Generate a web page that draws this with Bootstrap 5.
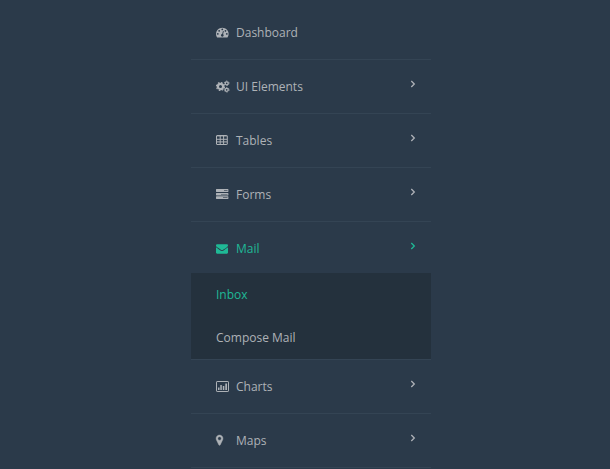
<!DOCTYPE html>
<html lang="en">
<head>
<meta charset="utf-8">
<title>Menu</title>
<link rel="stylesheet" href="https://cdn.jsdelivr.net/npm/bootstrap@5.3.0/dist/css/bootstrap.min.css">
<style>
body{background:#2b3a4a;font-family:"Open Sans",sans-serif;font-size:12px;line-height:18px;overflow:hidden}
.side-menu{width:240px;margin-left:191px;padding-top:6px}
.menu-item{border-bottom:1px solid #344454}
.menu-link{height:53px;padding:0 15px 0 25px;color:#aeb2b7}
.menu-icon{width:14px;height:12px;margin:-1px 6px 0 0;flex:none;overflow:visible}
.chevron{width:6px;height:8px;margin-top:-5px}
.sub-list{background:#24313d;margin-top:-2px}
.sub-link{height:43px;padding-left:25px;color:#aeb2b7}
.sub-link.current,.menu-link.current{color:#1fb996}
</style>
<script src="https://cdn.jsdelivr.net/npm/bootstrap@5.3.0/dist/js/bootstrap.bundle.min.js"></script>
</head>
<body>
<svg class="d-none"><symbol id="chev" viewBox="0 0 6 8"><path d="M1.3 1l3 3-3 3" fill="none" stroke="currentColor" stroke-width="1.3"/></symbol></svg>
<nav class="side-menu">
<ul class="list-unstyled mb-0">
<li class="menu-item"><a href="#" class="menu-link d-flex align-items-center text-decoration-none">
<svg class="menu-icon" viewBox="0 0 2090 1792" fill="currentColor"><path transform="translate(0 -20) scale(1.05)" d="M384 1152q0-53-37.5-90.5t-90.5-37.5-90.5 37.5-37.5 90.5 37.5 90.5 90.5 37.5 90.5-37.5 37.5-90.5zm192-448q0-53-37.5-90.5t-90.5-37.5-90.5 37.5-37.5 90.5 37.5 90.5 90.5 37.5 90.5-37.5 37.5-90.5zm428 481l101-382q6-26-7.5-48.5t-38.5-29.5-48 6.500-30 39.500l-101 382q-60 5-107 43.500t-63 98.500q-20 77 20 146t117 89 146-20 89-117q16-60-6-117t-72-91zm660-33q0-53-37.500-90.500t-90.500-37.500-90.500 37.500-37.500 90.500 37.500 90.500 90.500 37.500 90.500-37.500 37.500-90.500zm-640-640q0-53-37.500-90.500t-90.500-37.500-90.500 37.500-37.500 90.500 37.500 90.500 90.500 37.500 90.500-37.500 37.500-90.500zm448 192q0-53-37.500-90.500t-90.500-37.500-90.500 37.500-37.500 90.500 37.500 90.500 90.500 37.500 90.500-37.500 37.500-90.500zm320 448q0 261-141 483-19 29-54 29h-1402q-35 0-54-29-141-221-141-483 0-182 71-348t191-286 286-191 348-71 348 71 286 191 191 286 71 348z"/></svg>
<span>Dashboard</span></a></li>
<li class="menu-item"><a href="#" class="menu-link d-flex align-items-center text-decoration-none">
<svg class="menu-icon" viewBox="0 -.5 14 12" fill="none" stroke="currentColor"><circle cx="4.500" cy="6" r="2.600" stroke-width="2.200"/><circle cx="4.500" cy="6" r="4" stroke-width="1.200" stroke-dasharray="1.600 1.540"/><circle cx="10.700" cy="2.800" r="1.500" stroke-width="1.300"/><circle cx="10.700" cy="2.800" r="2.300" stroke-width=".9" stroke-dasharray="1.200 1.100"/><circle cx="10.700" cy="9.300" r="1.500" stroke-width="1.300"/><circle cx="10.700" cy="9.300" r="2.300" stroke-width=".9" stroke-dasharray="1.200 1.100"/></svg>
<span>UI Elements</span><svg class="chevron ms-auto"><use href="#chev"/></svg></a></li>
<li class="menu-item"><a href="#" class="menu-link d-flex align-items-center text-decoration-none">
<svg class="menu-icon" viewBox="0 0 14 12" fill="none" stroke="currentColor"><rect x=".5" y="1.500" width="10.800" height="9" rx=".5"/><path d="M1 2.200h10" stroke-width=".6"/><path d="M1 5.300h10M1 7.900h10M4.200 2v9M7.600 2v9"/></svg>
<span>Tables</span><svg class="chevron ms-auto"><use href="#chev"/></svg></a></li>
<li class="menu-item"><a href="#" class="menu-link d-flex align-items-center text-decoration-none">
<svg class="menu-icon" viewBox="0 0 14 12" fill="currentColor"><path d="M.4 1H12q.4 0 .4.400V3.600q0 .4-.4.400H.4Q0 4 0 3.600V1.400Q0 1 .4 1ZM.4 5H12q.4 0 .4.400V7q0 .4-.4.400H.4Q0 7.400 0 7V5.400Q0 5 .4 5ZM.4 8.300H12q.4 0 .4.400V10.600q0 .4-.4.400H.4Q0 11 0 10.600V8.700Q0 8.300 .4 8.300Z"/><path fill="#2b3a4a" fill-opacity=".6" d="M8 2h3.500v1H8zM5 6h6.500v.8H5zM7 9h4.500v1H7z"/></svg>
<span>Forms</span><svg class="chevron ms-auto"><use href="#chev"/></svg></a></li>
<li class="menu-item"><a href="#" class="menu-link current d-flex align-items-center text-decoration-none">
<svg class="menu-icon" viewBox="0 -80 2090 1792" fill="currentColor"><path d="M1792 710v794q0 66-47 113t-113 47h-1472q-66 0-113-47t-47-113v-794q44 49 101 87 362 246 497 345 57 42 92.500 65.500t94.500 48 110 24.500h2q51 0 110-24.500t94.500-48 92.500-65.500q170-123 498-345 57-39 100-87zm0-294q0 79-49 151t-122 123q-376 261-468 325-10 7-42.500 31t-54 38.500-52 32.500-57.500 27-50 9h-2q-23 0-50-9t-57.500-27-52-32.500-54-38.500-42.500-31q-91-64-262-182.500t-205-142.500q-62-42-117-115.500t-55-136.500q0-78 41.500-130t118.500-52h1472q65 0 112.500 47t47.500 113z"/></svg>
<span>Mail</span><svg class="chevron ms-auto"><use href="#chev"/></svg></a>
<ul class="sub-list list-unstyled">
<li><a href="#" class="sub-link current d-flex align-items-center text-decoration-none">Inbox</a></li>
<li><a href="#" class="sub-link d-flex align-items-center text-decoration-none">Compose Mail</a></li>
</ul></li>
<li class="menu-item"><a href="#" class="menu-link d-flex align-items-center text-decoration-none">
<svg class="menu-icon" viewBox="0 0 14 12"><rect x=".5" y="1.500" width="12" height="10" rx=".6" fill="none" stroke="currentColor"/><path fill="currentColor" d="M2 7.500h1.500v2.500H2zM4.300 5h1.500v5H4.300zM6.800 6h1.500v4H6.800zM9.300 3.500h1.700v6.500H9.300z"/></svg>
<span>Charts</span><svg class="chevron ms-auto"><use href="#chev"/></svg></a></li>
<li class="menu-item"><a href="#" class="menu-link d-flex align-items-center text-decoration-none">
<svg class="menu-icon" viewBox="370 -30 2090 1792" fill="currentColor" stroke="currentColor" stroke-width="60"><path d="M1152 640q0-106-75-181t-181-75-181 75-75 181 75 181 181 75 181-75 75-181zm256 0q0 109-33 179l-364 774q-16 33-47.500 52t-67.500 19-67.500-19-46.500-52l-365-774q-33-70-33-179 0-212 150-362t362-150 362 150 150 362z"/></svg>
<span>Maps</span><svg class="chevron ms-auto"><use href="#chev"/></svg></a></li>
</ul>
</nav>
</body>
</html>
